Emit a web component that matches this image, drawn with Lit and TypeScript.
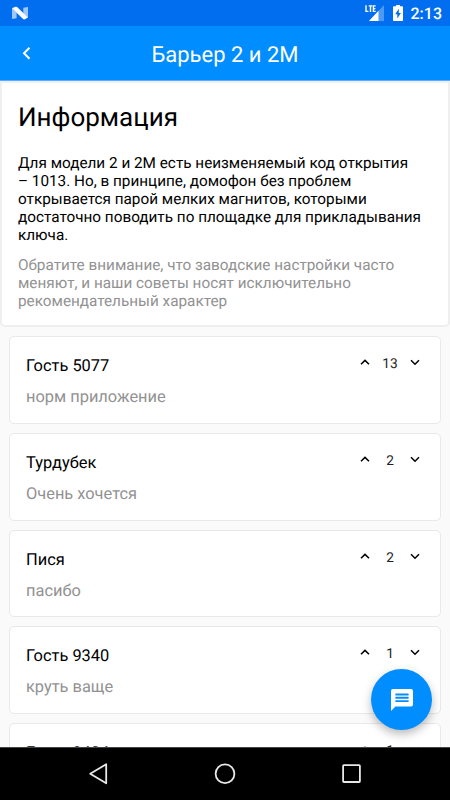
import { LitElement, html, svg, css } from "lit";
import { customElement, property } from "lit/decorators.js";

interface Comment {
  author: string;
  text: string;
  votes: number;
}

const COMMENTS: Comment[] = [
  { author: "Гость 5077", text: "норм приложение", votes: 13 },
  { author: "Турдубек", text: "Очень хочется", votes: 2 },
  { author: "Пися", text: "пасибо", votes: 2 },
  { author: "Гость 9340", text: "круть ваще", votes: 1 },
  { author: "Гость 9484", text: "", votes: 1 },
];

const chevron = (d: string) => html`<svg width="12" height="8" viewBox="0 0 12 8">
  ${svg`<path d=${d} fill="none" stroke="#000" stroke-width="1.5" />`}
</svg>`;

@customElement("status-bar")
class StatusBar extends LitElement {
  static styles = css`
    :host {
      display: flex;
      align-items: center;
      height: 26px;
      flex: none;
      box-sizing: border-box;
      padding: 0 8px 0 12px;
      background: #006eee;
      color: #fff;
    }
    svg { display: block; flex: none; }
    .gap { flex: 1; }
    .battery { margin: 0 8px 0 8px; }
    .clock {
      font-size: 16px;
      font-weight: 500;
      line-height: 20px;
      padding-top: 2px;
    }
  `;
  render() {
    return html`
      <svg width="17" height="26" viewBox="0 0 17 26">
        <path d="M0 8.3L4.6 12.4V18.2L0 19ZM11.3 7.8L16 7V17.8L11.3 13.5Z" fill="#fff" fill-opacity=".62" />
        <path d="M0 8.3L3.3 6.8Q4.3 6.4 5.1 7.1L16 17.4L12.8 19.2Q11.9 19.7 11.1 19Z" fill="#fff" />
      </svg>
      <span class="gap"></span>
      <svg width="20" height="26" viewBox="0 0 20 26">
        <path d="M19 5V21H4Z" fill="#fff" fill-opacity=".3" />
        <path d="M13.5 10.7V21H4Z" fill="#fff" />
        <path d="M1 5.2V11.4H3.4M3.7 5.9H7.3M5.5 5.9V12M10.7 5.9H8.4V11.4H10.7M8.4 8.6H10.4" fill="none" stroke="#fff" stroke-width="1.4" />
      </svg>
      <svg class="battery" width="10" height="26" viewBox="0 0 10 26">
        <path d="M3 5H7V6.3H9.2Q10 6.3 10 7.1V20.2Q10 21 9.2 21H.8Q0 21 0 20.2V7.1Q0 6.3 .8 6.3H3Z" fill="#fff" />
        <path d="M5.8 8.7L2.2 14.2H4.3V18.5L7.9 12.9H5.8Z" fill="#006eee" />
      </svg>
      <span class="clock">2:13</span>
    `;
  }
}

@customElement("title-bar")
class TitleBar extends LitElement {
  static styles = css`
    :host {
      display: grid;
      grid-template-columns: 52px 1fr 52px;
      align-items: center;
      height: 55px;
      flex: none;
      box-sizing: border-box;
      background: #008dff;
      border-bottom: 1px solid #5ea9fb;
      color: #fff;
    }
    svg { display: block; margin-left: 21px; }
    .title {
      text-align: center;
      font-size: 22px;
      line-height: 26px;
      padding-top: 5px;
    }
  `;
  render() {
    return html`
      <svg width="10" height="16" viewBox="0 0 10 16">
        <path d="M8.5 2.8L3 8.3L8.5 13.8" fill="none" stroke="#fff" stroke-width="2" />
      </svg>
      <span class="title">Барьер 2 и 2М</span>
    `;
  }
}

@customElement("info-card")
class InfoCard extends LitElement {
  static styles = css`
    :host {
      display: block;
      height: 246px;
      box-sizing: border-box;
      padding: 19px 16px 0;
      background: #fff;
      border: 2px solid #efefef;
      border-radius: 0 0 5px 5px;
    }
    .heading { font-size: 26px; line-height: 32px; }
    .lead { margin-top: 20px; font-size: 15.3px; line-height: 18px; }
    .note { margin-top: 12px; font-size: 15.3px; line-height: 18px; color: #929292; }
    .line { display: block; white-space: nowrap; }
  `;
  render() {
    return html`
      <div class="heading">Информация</div>
      <div class="lead">
        <span class="line">Для модели 2 и 2М есть неизменяемый код открытия</span>
        <span class="line">– 1013. Но, в принципе, домофон без проблем</span>
        <span class="line">открывается парой мелких магнитов, которыми</span>
        <span class="line">достаточно поводить по площадке для прикладывания</span>
        <span class="line">ключа.</span>
      </div>
      <div class="note">
        <span class="line">Обратите внимание, что заводские настройки часто</span>
        <span class="line">меняют, и наши советы носят исключительно</span>
        <span class="line">рекомендательный характер</span>
      </div>
    `;
  }
}

@customElement("comment-card")
class CommentCard extends LitElement {
  @property({ attribute: false }) comment!: Comment;

  static styles = css`
    :host {
      display: flex;
      justify-content: space-between;
      align-items: flex-start;
      flex: none;
      height: 87.75px;
      box-sizing: border-box;
      padding: 0 19px 0 16px;
      background: #fff;
      border: 1px solid #e9e9e9;
      border-radius: 5px;
    }
    .author { margin-top: 19px; font-size: 16.4px; line-height: 22px; }
    .text { margin-top: 9px; font-size: 16.4px; line-height: 22px; color: #929292; }
    .votes {
      display: grid;
      grid-template-columns: 12px 38px 12px;
      align-items: center;
      margin-top: 15px;
      font-size: 13.7px;
      line-height: 20px;
      text-align: center;
      color: #222;
    }
    .count { padding-top: 2px; }
    svg { display: block; }
  `;
  render() {
    const { author, text, votes } = this.comment;
    return html`
      <div>
        <div class="author">${author}</div>
        <div class="text">${text}</div>
      </div>
      <div class="votes">
        ${chevron("M2 5.3L6 1.4L10 5.3")}
        <span class="count">${votes}</span>
        ${chevron("M2 1.3L6 5.2L10 1.3")}
      </div>
    `;
  }
}

@customElement("nav-bar")
class NavBar extends LitElement {
  static styles = css`
    :host {
      display: flex;
      justify-content: space-between;
      align-items: center;
      height: 53px;
      flex: none;
      box-sizing: border-box;
      border-top: 1px solid #454545;
      padding: 0 87px;
      background: #000;
    }
    svg { display: block; }
  `;
  render() {
    return html`
      <svg width="22" height="22" viewBox="0 0 22 22">
        <path d="M19.2 1.3V20.3L3.2 10.8Z" fill="none" stroke="#e8e8e8" stroke-width="1.8" stroke-linejoin="round" />
      </svg>
      <svg width="22" height="22" viewBox="0 0 22 22">
        <circle cx="11" cy="10.7" r="9.4" fill="none" stroke="#e8e8e8" stroke-width="1.8" />
      </svg>
      <svg width="22" height="22" viewBox="0 0 22 22">
        <rect x="2.1" y="2.2" width="16.8" height="16.8" rx=".8" fill="none" stroke="#e8e8e8" stroke-width="1.8" />
      </svg>
    `;
  }
}

@customElement("app-root")
class AppRoot extends LitElement {
  static styles = css`
    :host {
      display: flex;
      flex-direction: column;
      position: relative;
      width: 450px;
      height: 800px;
      overflow: hidden;
      background: #fafafa;
      color: #000;
      font-family: Roboto, "Noto Sans", sans-serif;
      text-rendering: geometricPrecision;
    }
    .content { flex: 1; min-height: 0; overflow: hidden; }
    .list {
      display: flex;
      flex-direction: column;
      gap: 9px;
      padding: 9px 9px 0;
    }
    .fab {
      position: absolute;
      right: 18px;
      bottom: 70px;
      display: grid;
      place-items: center;
      width: 61px;
      height: 61px;
      padding: 0;
      border: 0;
      border-radius: 50%;
      background: #008dff;
      box-shadow: 0 4px 10px rgba(0, 0, 0, 0.28);
    }
  `;
  render() {
    return html`
      <status-bar></status-bar>
      <title-bar></title-bar>
      <div class="content">
        <info-card></info-card>
        <div class="list">
          ${COMMENTS.map((c) => html`<comment-card .comment=${c}></comment-card>`)}
        </div>
      </div>
      <nav-bar></nav-bar>
      <button class="fab" aria-label="Комментировать">
        <svg width="22" height="22" viewBox="0 0 22 22">
          <path d="M2 0H20Q22 0 22 2V15.5Q22 17.6 20 17.6H4.4L0 22V2Q0 0 2 0Z" fill="#fff" />
          <path d="M4.4 5.5H17.6M4.4 8.8H17.6M4.4 12.1H17.6" stroke="#008dff" stroke-width="1.9" />
        </svg>
      </button>
    `;
  }
}
